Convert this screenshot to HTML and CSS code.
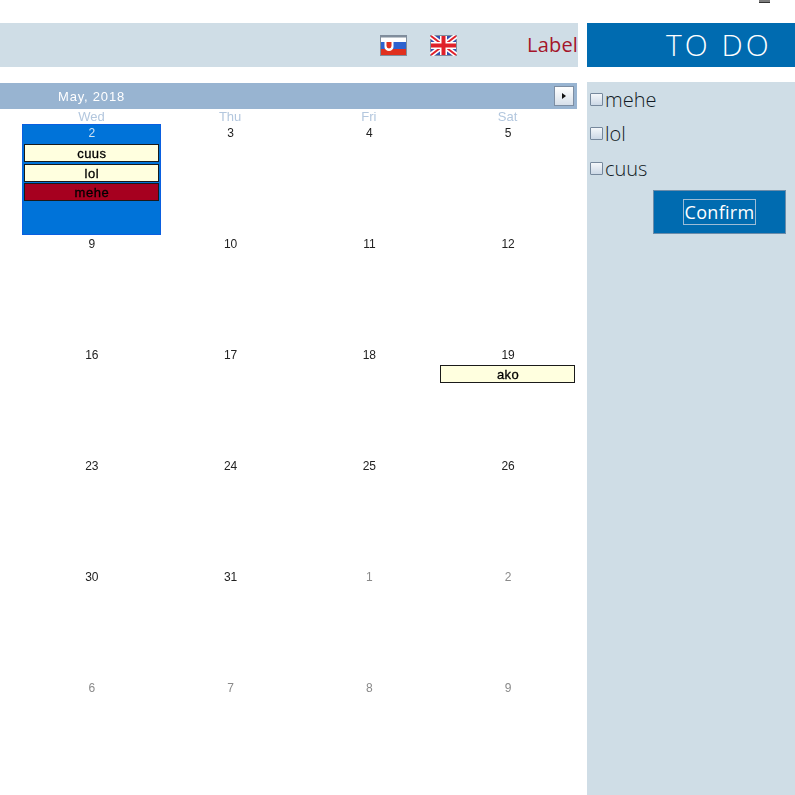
FILE: index.html
```html
<!DOCTYPE html>
<html lang="en">
<head>
  <meta charset="utf-8" />
  <title>To do calendar</title>
  <link rel="stylesheet" href="styles.css">
</head>
<body>
  <div class="top-strip"><span class="top-mark"></span></div>
  <div class="page">
    <main class="left">
      <header class="lang-bar">
        <svg class="flag flag-sk" width="27" height="21" viewBox="0 0 27 21">
          <rect x="0.5" y="0.5" width="26" height="20" fill="#fff" stroke="#808d9c"/>
          <rect x="1" y="1" width="25" height="1.500" fill="#808d9c"/>
          <rect x="1" y="7" width="25" height="7" fill="#2e62cf"/>
          <rect x="1" y="14" width="25" height="6" fill="#e0301e"/>
          <path d="M4.500 7v5a4.500 4 0 0 0 9 0V7z" fill="#fff"/>
          <path d="M6.500 7v4a2.500 2.500 0 0 0 5 0V7z" fill="#e0301e"/>
        </svg>
        <svg class="flag flag-uk" width="27" height="21" viewBox="0 0 27 21">
          <rect x="0.5" y="0.5" width="26" height="20" fill="#3350b0" stroke="#808d9c"/>
          <path d="M1 1l25 19M26 1L1 20" stroke="#fff" stroke-width="5"/>
          <path d="M1 1l25 19M26 1L1 20" stroke="#e0202a" stroke-width="2"/>
          <path d="M13.500 1v19M1 10.500h25" stroke="#fff" stroke-width="7"/>
          <path d="M13.500 1v19M1 10.500h25" stroke="#e0202a" stroke-width="4"/>
        </svg>
        <span class="label">Label</span>
      </header>

      <section class="calendar">
        <div class="cal-title">
          <span class="month">May, 2018</span>
          <button class="next" type="button"><span class="arrow"></span></button>
        </div>
        <div class="cal-grid">
          <div class="dow">Wed</div>
          <div class="dow">Thu</div>
          <div class="dow">Fri</div>
          <div class="dow">Sat</div>

          <div class="day selected">
            <div class="num">2</div>
            <div class="event">cuus</div>
            <div class="event">lol</div>
            <div class="event red">mehe</div>
          </div>
          <div class="day"><div class="num">3</div></div>
          <div class="day"><div class="num">4</div></div>
          <div class="day"><div class="num">5</div></div>

          <div class="day"><div class="num">9</div></div>
          <div class="day"><div class="num">10</div></div>
          <div class="day"><div class="num">11</div></div>
          <div class="day"><div class="num">12</div></div>

          <div class="day"><div class="num">16</div></div>
          <div class="day"><div class="num">17</div></div>
          <div class="day"><div class="num">18</div></div>
          <div class="day">
            <div class="num">19</div>
            <div class="event">ako</div>
          </div>

          <div class="day"><div class="num">23</div></div>
          <div class="day"><div class="num">24</div></div>
          <div class="day"><div class="num">25</div></div>
          <div class="day"><div class="num">26</div></div>

          <div class="day"><div class="num">30</div></div>
          <div class="day"><div class="num">31</div></div>
          <div class="day other"><div class="num">1</div></div>
          <div class="day other"><div class="num">2</div></div>

          <div class="day other"><div class="num">6</div></div>
          <div class="day other"><div class="num">7</div></div>
          <div class="day other"><div class="num">8</div></div>
          <div class="day other"><div class="num">9</div></div>
        </div>
      </section>
    </main>

    <aside class="right">
      <h1 class="todo-title">TO DO</h1>
      <div class="todo-panel">
        <div class="todo-item"><span class="check"></span>mehe</div>
        <div class="todo-item"><span class="check"></span>lol</div>
        <div class="todo-item"><span class="check"></span>cuus</div>
        <div class="confirm-row">
          <button class="confirm" type="button"><span class="confirm-text">Confirm</span></button>
        </div>
      </div>
    </aside>
  </div>
</body>
</html>
```

FILE: styles.css
```css
html, body {
  margin: 0;
  height: 795px;
  overflow: hidden;
  background-color: #ffffff;
}
body {
  font-family: 'Open Sans', sans-serif;
  color: #111;
}
.top-strip {
  height: 23px;
  display: flex;
  justify-content: flex-end;
  align-items: flex-start;
  padding-right: 25px;
}
.top-mark {
  width: 11px;
  height: 3px;
  background-color: #7d7d7d;
  border-bottom: 1px solid #333;
  box-sizing: border-box;
}
.page {
  display: grid;
  grid-template-columns: 578px 208px;
  column-gap: 9px;
}
.lang-bar {
  height: 44px;
  background-color: #cfdde6;
  display: flex;
  align-items: center;
  padding-left: 380px;
  box-sizing: border-box;
}
.flag {
  flex: none;
  display: block;
}
.flag-uk {
  margin-left: 23px;
}
.label {
  margin: 0 0 2px 70px;
  font-size: 20px;
  color: #a5142a;
  letter-spacing: 0.2px;
}
.calendar {
  margin-top: 16px;
  font-family: 'Liberation Sans', sans-serif;
  will-change: opacity;
}
.cal-title {
  height: 26px;
  width: 577px;
  background-color: #98b4d1;
  display: flex;
  align-items: center;
  justify-content: space-between;
  box-sizing: border-box;
  padding: 0 3px 0 58px;
}
.month {
  color: #ffffff;
  font-size: 13px;
  letter-spacing: 0.8px;
}
.next {
  width: 20px;
  height: 20px;
  padding: 0;
  border: 1px solid #7d8ea3;
  background: linear-gradient(#ffffff, #d7e0ea);
  display: flex;
  align-items: center;
  justify-content: center;
}
.arrow {
  width: 0;
  height: 0;
  border-left: 4px solid #111;
  border-top: 3.5px solid transparent;
  border-bottom: 3.5px solid transparent;
}
.cal-grid {
  display: grid;
  grid-template-columns: repeat(4, 138.75px);
  grid-template-rows: 15px repeat(6, 111px);
  margin-left: 22px;
  width: 555px;
}
.dow {
  text-align: center;
  font-size: 13px;
  line-height: 15px;
  color: #b3c7de;
}
.day {
  box-sizing: border-box;
  padding: 2px 2px 0;
  text-align: center;
  font-size: 12px;
}
.num {
  height: 17px;
  line-height: 15px;
  padding-left: 1px;
  color: #222;
}
.day.other .num {
  color: #8a8a8a;
}
.day.selected {
  background-color: #0073d9;
  border: 1px solid #0a5fe0;
  padding: 1px 1px 0;
  height: 111px;
}
.day.selected .num {
  height: 18px;
  color: #cfe3f5;
}
.event {
  height: 18px;
  line-height: 17px;
  margin-bottom: 1.5px;
  padding-left: 1px;
  box-sizing: border-box;
  border: 1px solid #1a1a1a;
  background-color: #ffffdf;
  color: #000;
  font-size: 13px;
  letter-spacing: 0.5px;
  -webkit-text-stroke: 0.3px #000;
}
.event.red {
  background-color: #a6001f;
}
.todo-title {
  margin: 0;
  height: 44px;
  background-color: #006bb0;
  color: #ffffff;
  font-weight: 300;
  font-size: 30px;
  line-height: 44px;
  letter-spacing: 3px;
  padding-left: 79px;
  box-sizing: border-box;
}
.todo-panel {
  margin-top: 15px;
  height: 713px;
  background-color: #cfdde6;
  padding: 0 9px 0 3px;
  box-sizing: border-box;
}
.todo-item {
  height: 34.5px;
  display: flex;
  align-items: center;
  font-size: 20px;
  font-weight: 300;
  color: #111a24;
}
.check {
  width: 11px;
  height: 11px;
  margin-right: 2px;
  flex: none;
  border: 1px solid #76889c;
  border-radius: 1px;
  background: linear-gradient(#f4f7fa, #ccd8e6);
}
.confirm-row {
  display: flex;
  justify-content: flex-end;
  margin-top: 4.5px;
}
.confirm {
  width: 133px;
  height: 44px;
  padding: 0;
  background-color: #006bb0;
  border: 1px solid #6b8caa;
  display: flex;
  align-items: center;
  justify-content: center;
  font-family: 'Open Sans', sans-serif;
}
.confirm-text {
  border: 1px solid #9dbcd6;
  color: #ffffff;
  font-size: 18px;
  line-height: 24px;
  padding: 0 1px;
  letter-spacing: 0.3px;
}
```
